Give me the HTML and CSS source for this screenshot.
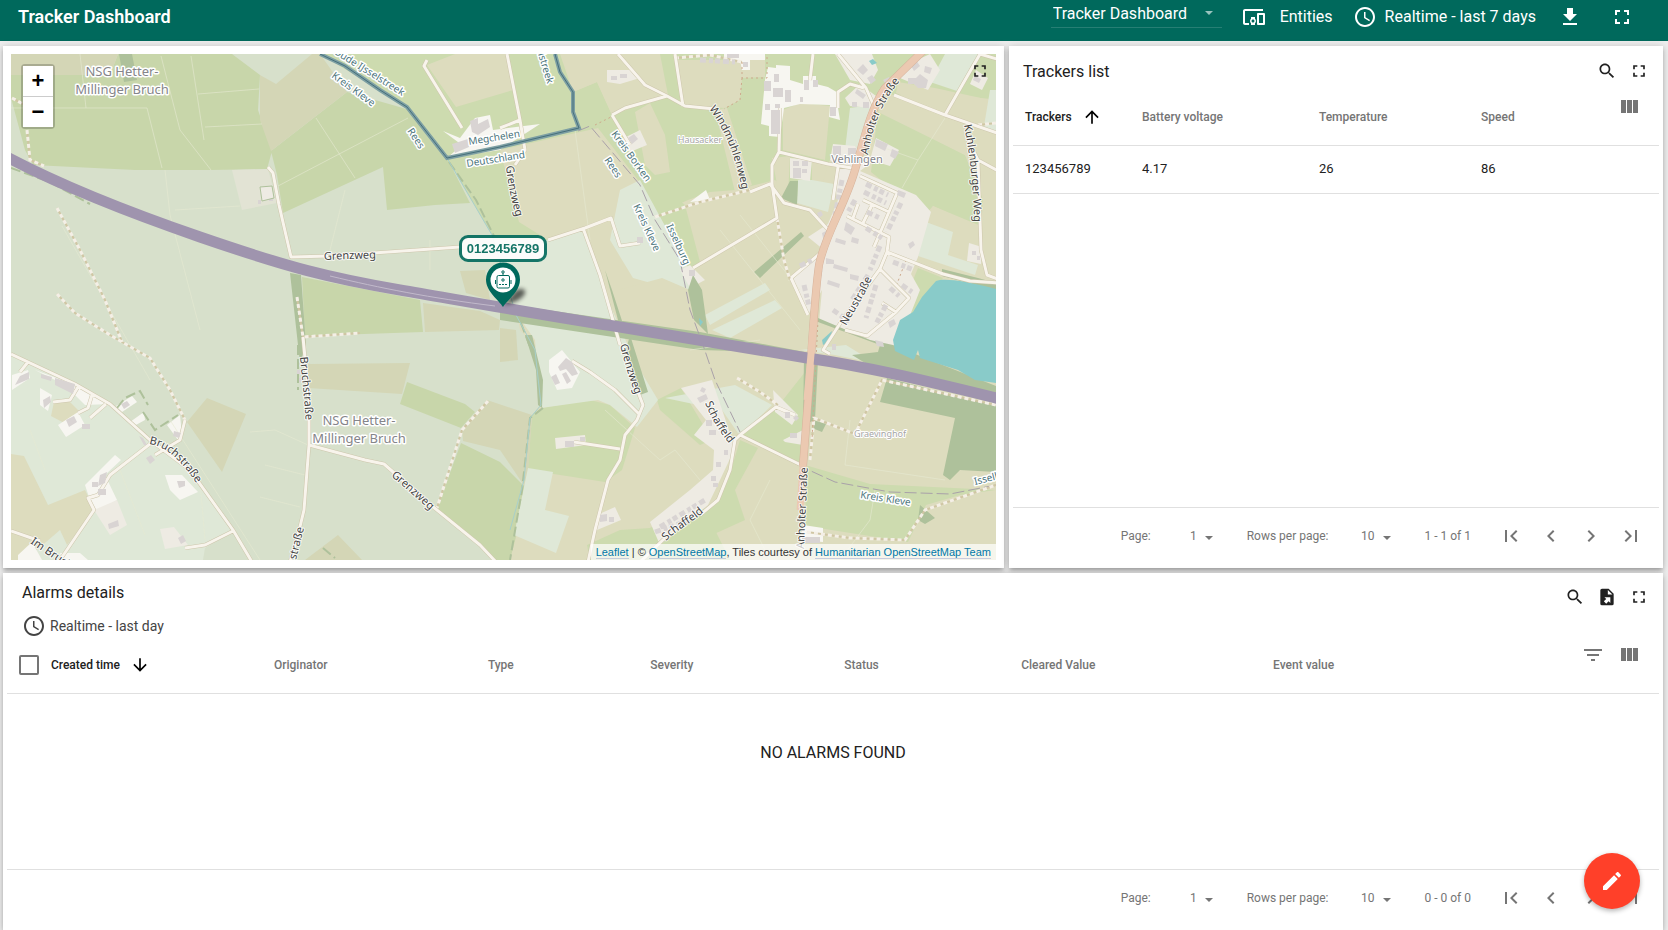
FILE: index.html
```html
<!DOCTYPE html>
<html lang="en">
<head>
<meta charset="utf-8">
<meta name="viewport" content="width=device-width, initial-scale=1">
<title>Tracker Dashboard</title>
<link rel="stylesheet" href="styles.css">
</head>
<body>
<svg class="sprite" aria-hidden="true">
  <symbol id="i-full" viewBox="0 0 24 24"><path d="M7 14H5v5h5v-2H7v-3zm-2-4h2V7h3V5H5v5zm12 7h-3v2h5v-5h-2v3zM14 5v2h3v3h2V5h-5z"/></symbol>
  <symbol id="i-search" viewBox="0 0 24 24"><path d="M15.5 14h-.79l-.28-.27C15.41 12.59 16 11.11 16 9.5 16 5.91 13.09 3 9.5 3S3 5.91 3 9.5 5.91 16 9.5 16c1.61 0 3.09-.59 4.23-1.57l.27.28v.79l5 4.99L20.49 19l-4.99-5zm-6 0C7.01 14 5 11.99 5 9.5S7.01 5 9.5 5 14 7.01 14 9.5 11.99 14 9.5 14z"/></symbol>
  <symbol id="i-cols" viewBox="0 0 24 24"><path d="M10 18h5V5h-5v13zm-6 0h5V5H4v13zM16 5v13h5V5h-5z"/></symbol>
  <symbol id="i-filter" viewBox="0 0 24 24"><path d="M10 18h4v-2h-4v2zM3 6v2h18V6H3zm3 7h12v-2H6v2z"/></symbol>
  <symbol id="i-clock" viewBox="0 0 24 24"><path d="M11.99 2C6.47 2 2 6.48 2 12s4.47 10 9.99 10C17.52 22 22 17.52 22 12S17.52 2 11.99 2zM12 20c-4.42 0-8-3.58-8-8s3.58-8 8-8 8 3.58 8 8-3.58 8-8 8zm.5-13H11v6l5.25 3.15.75-1.23-4.5-2.67z"/></symbol>
  <symbol id="i-download" viewBox="0 0 24 24"><path d="M19 9h-4V3H9v6H5l7 7 7-7zM5 18v2h14v-2H5z"/></symbol>
  <symbol id="i-devices" viewBox="0 0 24 24"><path d="M3 6h18V4H3c-1.1 0-2 .9-2 2v12c0 1.1.9 2 2 2h4v-2H3V6zm10 6H9v1.78c-.61.55-1 1.33-1 2.22s.39 1.67 1 2.22V20h4v-1.78c.61-.55 1-1.34 1-2.22s-.39-1.67-1-2.22V12zm-2 5.5c-.83 0-1.5-.67-1.5-1.5s.67-1.5 1.5-1.5 1.5.67 1.5 1.5-.67 1.5-1.5 1.5zM22 8h-6c-.5 0-1 .5-1 1v10c0 .5.5 1 1 1h6c.5 0 1-.5 1-1V9c0-.5-.5-1-1-1zm-1 10h-4v-8h4v8z"/></symbol>
  <symbol id="i-first" viewBox="0 0 24 24"><path d="M18.41 16.59L13.82 12l4.59-4.59L17 6l-6 6 6 6zM6 6h2v12H6z"/></symbol>
  <symbol id="i-prev" viewBox="0 0 24 24"><path d="M15.41 7.41L14 6l-6 6 6 6 1.41-1.41L10.83 12z"/></symbol>
  <symbol id="i-next" viewBox="0 0 24 24"><path d="M10 6L8.59 7.41 13.17 12l-4.58 4.59L10 18l6-6z"/></symbol>
  <symbol id="i-last" viewBox="0 0 24 24"><path d="M5.59 7.41L10.18 12l-4.59 4.59L7 18l6-6-6-6zM16 6h2v12h-2z"/></symbol>
  <symbol id="i-up" viewBox="0 0 24 24"><path d="M4 12l1.41 1.41L11 7.83V20h2V7.83l5.58 5.59L20 12l-8-8-8 8z"/></symbol>
  <symbol id="i-down" viewBox="0 0 24 24"><path d="M20 12l-1.41-1.41L13 16.17V4h-2v12.17l-5.58-5.59L4 12l8 8 8-8z"/></symbol>
  <symbol id="i-edit" viewBox="0 0 24 24"><path d="M3 17.25V21h3.75L17.81 9.94l-3.75-3.75L3 17.25zM20.71 7.04c.39-.39.39-1.02 0-1.41l-2.34-2.34c-.39-.39-1.02-.39-1.41 0l-1.83 1.83 3.75 3.75 1.83-1.83z"/></symbol>
  <symbol id="i-export" viewBox="0 0 24 24"><path fill-rule="evenodd" d="M6 2C4.89 2 4 2.9 4 4V20A2 2 0 0 0 6 22H18A2 2 0 0 0 20 20V8L14 2H6M13 3.5L18.5 9H13V3.5M8.93 12.22H16V19.29L13.88 17.17L11.05 20L8.22 17.17L11.05 14.35L8.93 12.22"/></symbol>
  <symbol id="i-caret" viewBox="0 0 8 4"><path d="M0 0h8L4 4z"/></symbol>
</svg>

<header class="topbar">
  <h1 class="topbar-title">Tracker Dashboard</h1>
  <div class="state-select">
    <select aria-label="Dashboard"><option>Tracker Dashboard</option></select>
    <svg class="caret"><use href="#i-caret"/></svg>
  </div>
  <button class="bar-btn entities"><svg class="icon"><use href="#i-devices"/></svg>Entities</button>
  <button class="bar-btn timewindow"><svg class="icon"><use href="#i-clock"/></svg>Realtime - last 7 days</button>
  <button class="bar-btn" aria-label="Export"><svg class="icon"><use href="#i-download"/></svg></button>
  <button class="bar-btn full" aria-label="Fullscreen"><svg class="icon"><use href="#i-full"/></svg></button>
</header>

<main class="grid">
  <section class="card map-card" aria-label="Map">
    <div class="map">
      <svg class="map-svg" viewBox="11 54 985 506" preserveAspectRatio="xMidYMid slice">
        <defs>
          <path id="p-anh" d="M868 155C872 130 880 105 899 82"/>
          <path id="p-anh2" d="M804 549L808 460"/>
          <path id="p-wind" d="M709 109C722 125 734 150 742 190"/>
          <path id="p-kuhl" d="M964 125C969 150 974 185 974 230"/>
          <path id="p-neu" d="M846 326C855 310 865 295 874 274"/>
          <path id="p-gr1" d="M506 166C508 185 512 205 519 226"/>
          <path id="p-gr2" d="M620 345C624 362 630 380 638 402"/>
          <path id="p-gr3" d="M391 476C403 486 418 499 432 512"/>
          <path id="p-br1" d="M300 357C302 380 305 400 306 430"/>
          <path id="p-br2" d="M149 444C168 447 182 462 197 484"/>
          <path id="p-sch1" d="M705 403C712 420 720 433 733 448"/>
          <path id="p-sch2" d="M666 541C676 530 688 526 705 511"/>
          <path id="tracks" d="M57 208L80 250 105 300 122 342M57 294L75 313 110 335 122 342 150 358 170 390 185 420M297 297L303 337 360 333M488 401L462 430 437 508M655 217L700 202 750 190M777 218L784 260 790 280M807 532L850 538 905 540 925 510 996 485M810 460L814 418 855 434 882 380 996 405M737 378L760 392 778 405M27 130L30 160 44 166M12 98L25 105M675 58L710 55 742 62M996 123L970 126"/>
          <path id="roads" d="M268 167L273 173 279 205 291 257 330 256 460 247M303 337L309 400 309 445 304 510 298 535 290 562M309 445L365 460 384 464 432 506 480 545 496 562M11 354L75 384 110 404 150 440 190 470 233 530 252 562M150 444L110 475 98 495 88 498 94 510 60 560M185 420L180 440 155 455M11 531L40 541M185 548L205 545 233 531M28 362L20 372M78 387L70 400 53 402M92 395L88 408 78 413M106 404L90 418M427 60L424 66 462 128M507 54L520 120 525 150 515 165M500 128L520 120M548 240L585 228 611 218 620 246 640 243M583 228L600 275 620 345M638 392L643 405 637 420 625 435 620 460 608 480 595 530 588 562M572 361L590 372 615 390 640 415M574 442L620 449M612 115L625 108 667 96 685 106 715 109M618 54L645 85 667 96M675 54L683 106M612 115L630 145M750 192L770 184 784 203 810 210 831 233M779 152L828 164 858 169M780 108L779 152 772 165 772 184 777 218 693 268M813 54L810 80M838 54L866 88 874 106M894 95L945 115 1000 134M945 115L980 54 1000 60M838 108L838 92 850 84 864 88M968 140L978 160 981 250 987 275 1000 280M978 160L1000 172M860 176L897 193 874 247M847 216L889 237 887 252 943 274 970 281 1000 283M838 167L833 200M887 252L880 269 841 322 823 350 830 354M880 269L909 298 896 312 867 336 845 330M791 278L824 250M791 278L808 315M863 200L889 212M872 205L863 223M858 204L853 218M896 312L882 303M803 466L740 435 735 440 730 470 718 500 700 515M740 435L776 407 795 415M665 538L640 562"/>
        </defs>

        <rect x="11" y="54" width="985" height="506" fill="#dddcbe"/>

        <!-- meadows -->
        <g fill="#cddbaf">
          <path d="M320 54H560L573 92 597 82 612 115 640 110 665 172 650 175 685 205 700 262 690 270 655 218 638 180 598 128 580 132 500 150 519 222 548 240H493L447 158 407 107Z"/>
          <path d="M612 54H1000V100L960 96 893 95 885 90 860 105 860 150 850 170 830 160 818 185 797 196 775 180 735 190 710 192 688 200 655 215 640 180 612 115Z"/>
          <path d="M541 408L590 400 610 405 635 428 622 470 605 482 528 470 532 415Z"/>
          <path d="M657 400L681 388 693 408 712 440 700 445 660 410Z"/>
          <path d="M740 436L775 410 805 372 803 465 785 458Z"/>
          <path d="M805 465L870 484 996 490 960 495 926 505 908 542 806 526Z"/>
          <path d="M740 440L758 448 735 490 745 520 690 545 680 530 715 505 728 480Z"/>
          <path d="M587 545L620 530 650 528 700 500 730 560H590Z"/>
          <path d="M203 560L207 546 233 533 247 560Z"/>
          <path d="M878 110L965 155 983 200 981 228 933 206 925 215 871 172Z"/>
          <path d="M918 268L943 278 912 315 905 300Z"/>
        </g>
        <path fill="#dddcbe" d="M562 54H660L668 95 612 115 597 82 573 92ZM675 60L765 60V77L742 78 740 100 725 108 683 106ZM635 112L650 103 665 135 670 172 655 175 645 165ZM715 110L727 108 752 185 735 192ZM783 110L800 103 830 106 825 160 783 150ZM896 96L970 130 1000 135V283L985 280 983 165 965 155 878 112ZM933 206L981 226 980 262 948 255 953 232 926 222ZM772 158L790 156 788 196 780 200ZM812 160L828 164 822 186 812 180ZM898 82L935 88 990 100 984 124 945 113 896 93ZM455 54H507L513 90 456 107 427 65Z"/>

        <!-- nature reserve -->
        <path fill="#d7e0cb" d="M11 54H320L407 107 447 158 495 240 515 305 520 330 538 350 541 405 532 415 525 490 510 560H11Z"/>
        <path fill="#c8d6aa" d="M11 75L110 75 118 54H232L260 75 258 110 272 151 267 169 210 170 135 170 33 165 25 150 11 98ZM347 92L410 110 447 158 470 203 435 205 387 210 383 167 283 213 277 175 271 151ZM302 277L420 300 423 332 305 336ZM407 382L465 404 475 412 461 428 400 404ZM461 443L500 462 528 490 510 560H494L437 508Z"/>
        <path fill="#d4d6b6" d="M11 54H118L110 75H11ZM312 54H320L347 92 271 151 260 120V75L276 84ZM423 303L480 311 500 320 499 330 425 332ZM460 271L485 270 490 300 466 293ZM308 364L410 363 402 394 308 388ZM207 398L246 414 222 472 187 422ZM487 400L532 415 527 490 500 450 463 441 462 428ZM305 560L338 535 362 560ZM500 328L516 330 518 360 500 362Z"/>
        <path fill="#e2e3d4" d="M232 170L268 169 277 203 242 210Z"/>
        <path fill="#dfe8d7" d="M11 354L75 384 110 404 150 440 190 470 233 530 205 548 203 560H11ZM493 240H548L583 228 600 272 608 300 640 370 658 400 637 427 610 405 598 400 541 408 535 340 516 313ZM620 190L640 180 700 290 676 290 633 278 610 240ZM665 398L735 385 772 405 740 436 722 410ZM705 315L765 283 770 290 710 325ZM712 330L775 300 782 308 730 338ZM528 468L553 472 545 510 569 516 556 553 514 535ZM798 180L812 180 834 184 828 212 797 203ZM850 108L872 105 866 155 845 150ZM800 350L846 345 875 363 835 355ZM926 222L953 232 948 255 978 265 975 275 918 256ZM945 54H978L957 91 930 82ZM990 90H1000V135L984 126Z"/>
        <path fill="#dddcbe" d="M11 454L24 456 48 505 85 490 95 510 67 545 60 530 25 560H11ZM54 402L68 400 80 412 66 424 51 416Z"/>
        <path fill="#dddcbe" d="M608 300L618 290 662 278 690 290 695 330 640 325 630 350Z"/>

        <!-- built-up land -->
        <path fill="#eeebe3" d="M860 171L916 195 931 212 918 257 911 274 920 290 896 351 865 338 841 328 819 322 822 290 808 315 791 281 824 250 808 237 828 224 838 200 834 184 838 166 830 160 833 144 855 146 860 155 872 162ZM870 160L876 138 899 150 890 166ZM835 54H872L878 70 870 84 850 80ZM906 65L930 54 940 70 928 90 900 78ZM860 84L876 96 872 108 850 106 845 98ZM681 388L712 380 735 448 720 480 708 505 660 545 650 522 690 490 713 470 714 450 694 435 706 420ZM607 70L630 70 640 78 620 84 607 82ZM773 390L798 415 792 425 775 412ZM783 440L803 430V445L785 442ZM790 158L812 160 810 181 790 178ZM620 140L640 130 647 145 630 152ZM690 265L705 280 690 288 680 270ZM969 243L982 247 981 264 967 261ZM976 70L988 78 982 90 970 84ZM597 515L615 507 621 520 597 530Z"/>
        <path fill="#f7f6f1" d="M768 67L776 68V65L790 66V80L803 84V76L816 76V84L828 87 840 94 838 108 840 120 829 117 830 105 800 104 784 108 780 137 769 136V126L761 124 765 80ZM443 131L460 138 475 118 490 115 493 130 540 124 500 150 447 158 462 145ZM549 360L562 350 580 372 572 388 557 390 549 372ZM35 370L62 380 80 386 110 404 85 405 65 385ZM12 375L28 370 30 378 12 390ZM85 485L115 455 121 460 105 475 117 500 97 512 90 500ZM165 475L182 475 198 492 180 500 170 490ZM724 54H765V60H750V70H742L740 60H724ZM40 388L52 395 48 411 40 405ZM58 425L78 412 85 425 66 437ZM116 406L132 396 137 402 122 412ZM130 422L144 412 145 420 134 426ZM167 425L180 415 182 435 178 440ZM18 555L32 542 42 560H18ZM803 525L823 528V542L800 540ZM690 202L706 190 710 200ZM60 553L80 553 88 560H62Z"/>
        <path fill="#eeebe3" d="M94 510L117 500 127 525 110 535ZM160 529L174 527 188 545 165 549ZM555 438L585 435 586 445 556 449Z"/>

        <!-- woods -->
        <path fill="#aec19b" d="M887 378L996 406V472L960 470 950 480 943 475 955 418 880 402ZM818 318L870 340 893 345 935 362 996 386 996 395 880 372 852 355 878 352 880 345 818 322ZM688 290L694 320 708 334 702 290 693 275ZM804 358L818 360 815 420 803 425ZM290 273L301 275 306 345 300 363ZM605 270L612 290 625 330 618 320ZM630 335L648 392 640 395 626 350ZM500 303L561 312 700 332 810 353 700 350 500 320ZM754 272L801 232 804 236 760 278ZM942 269L978 278 996 283V290L942 276ZM119 54L132 54 137 80 124 82ZM790 181L798 181 797 205 781 198ZM525 335L532 335 543 380 542 408 538 405 536 370ZM813 420L826 424 822 432 812 428ZM920 505L935 518 925 524 918 520Z"/>
        <path fill="#89cbc9" d="M936 281C945 278 965 281 996 289V383L975 380 958 370 920 358 918 350 914 360 895 351 893 340 900 320 913 312 922 297ZM822 340L832 331 830 341 823 345ZM869 61L873 59 877 63 872 65ZM699 318L703 322 700 326Z"/>

        <!-- field boundaries -->
        <path class="field" d="M161 56L180 130 211 170M191 56L204 140M80 54L86 108M11 108H147L162 168M198 94L259 89M205 127L262 124M316 118L355 178M278 186L408 118M165 170L170 215 200 330M62 226L150 380M170 420L260 560M175 210L240 206M345 190L330 250M430 240V270M575 130L590 240M605 410L660 460 675 450 700 480M770 480L750 520 770 560M845 465L945 480M850 420L845 465M875 490L870 520 840 560M720 230L800 330M740 215L800 290M250 432L275 430 308 445M265 465L305 475M260 497L300 507M30 430L45 470M120 470L145 535M200 480L205 540M876 145L918 160 945 118M918 160L902 188M690 350L760 340"/>

        <!-- hedges and administrative borders -->
        <path class="hedge" d="M117 408L125 398 140 391 148 405M143 412L155 430 178 415M11 168L50 182 90 204M449 162L476 200 494 236M516 310L535 360M543 408L530 418 522 490 510 560M323 548L335 558M298 345V390"/>
        <path fill="none" stroke="#a7cfca" stroke-width="1" d="M447 158L492 235 506 280 516 315 535 350 541 405 530 418 524 480 510 530"/>
        <path class="border" d="M578 131L590 126 640 185 655 220 680 260 690 310 703 345 715 380 740 432M755 442L800 466 835 482 890 492 950 494 996 485"/>

        <use href="#tracks" class="track-case"/>
        <use href="#tracks" class="track"/>
        <path class="foot" d="M742 62V78H767V56M742 78L740 100 724 109M595 125L611 117M906 260L897 284M818 320L812 440"/>
        <use href="#roads" class="road-case"/>
        <use href="#roads" class="road"/>

        <!-- buildings -->
        <path fill="#d9d4d3" d="M774 74h5v8h-5zM764 81h7v10h-7zM773 88h10v9h-10zM785 90h6v12h-6zM771 110h9v24h-9zM804 80h5v10h-5zM813 80h5v7h-5zM800 97h3v5h-3zM765 104h5v6h-5zM775 104h5v4h-5zM830 107h6v9h-6zM470 121l8-3v6l10-5 2 8-12 8-6-3zM452 144l16-5 1 8-14 6zM55 378l20 6-2 10-18-9zM41 374l11 3-1 4-10-3zM20 376l9-4v7l-14 6zM43 400l7-4 1 6-7 6zM66 420l8-4 3 6-8 5zM82 424h8v5h-8zM100 475l7-3-2 11-7 3zM92 482h6v5h-6zM98 489h8v6h-8zM108 524l10-4 1 6-10 3zM177 481h8v5l-6 2zM146 458l5-3 4 5-5 4zM174 431l7 2-2 5-6-2zM178 538l5-3 3 6-5 3zM139 436l4 2 4 7-3 0zM121 404l6-3 3 4-6 4zM558 367l8-9 6 4 6 12-6 2-6-7-6 2zM551 377l5-3 4 9-5 2zM562 374l4-2 5 9-4 3zM565 441h9v6h-9zM580 437h5v4h-5zM611 76h6v4h-6zM620 74h7v4h-7zM628 138l6-4 4 5-6 5zM637 237h6v6h-6zM689 270h6v6h-6zM793 161h6v5h-6zM802 161h6v5h-6zM793 168h8v10h-8zM802 169h5v4h-5zM876 139l12 5-3 7-10-5zM892 149l7 3-4 7-5-3zM833 146h8v9h-8zM848 148h8v7h-8zM857 70l6-6 5 6-5 5zM867 78l5-3 4 5-5 4zM883 80l6-3 3 5-5 4zM857 89l9 6-3 4-8-6zM852 102h5v5h-5zM863 102h6v6h-6zM910 64l6-4 4 6-6 5zM908 78h8l4-4 8 6-2 8h-8l-4-4h-6zM925 66l7 2-2 6-6-2zM972 251h4v4h-4zM977 256h3v4h-3zM975 76l6 3-2 4-6-3zM846 222l9 6-4 7-7-5zM836 238l10 3-1 4-10-3zM852 237l7 2-1 5-7-2zM826 258l8 2v4h-8zM834 264l14 4-1 4-14-4zM850 274l9 2-1 5-8-2zM828 280l12 4-1 4-12-4zM888 322l6-3 2 5-6 4zM875 340l8 2 1 5-7-1zM832 344h4v6h-4zM898 190l8 3-2 5-7-3zM908 244l5-3 2 4-5 4zM817 213l4-2 2 4-4 3zM822 233l4-2 1 5-4 2zM790 433h7v5h-7zM785 412h5v6h-5zM793 418l3-3 3 3-3 3zM702 387l4 2-2 4-4-2zM706 420h6v6h-6zM713 417h4v6h-4zM709 430h7v5h-7zM724 450h4v5h-4zM716 462h5v5h-5zM711 476h5v5h-5zM713 483h5v4h-5zM600 515l7-1v7l-7 1zM609 517h5v5h-5zM697 398l9-4 2 5-8 4zM258 200h3v4h-3zM269 196h4v5h-4zM297 370h4v4h-4zM299 378h4v4h-4zM802 537h18v6h-18zM743 62h5v5h-5zM727 54h12v4h-12z"/>
        <path class="houses" d="M842 180L835 215M866 184L888 195M901 203L887 232M867 212L880 218M864 192L886 203M855 200L848 212M866 228L882 238M880 246L870 270M893 262L914 270M868 275L852 300M876 285L866 318M890 288L899 296M886 305L876 324M833 310L850 322M800 266L812 260M804 285L809 306M820 270L815 300M902 285L912 292M660 527L705 500M655 532L690 520M700 60L735 62"/>
        <path class="yard" d="M260 187l12-1 2 12-12 3z"/>

        <!-- main road and motorway -->
        <path d="M924 50L885 88C870 110 864 140 855 170C845 205 825 235 819 265C814 300 812 350 808 400L803 466" fill="none" stroke="#d6b39c" stroke-width="8"/>
        <path d="M924 50L885 88C870 110 864 140 855 170C845 205 825 235 819 265C814 300 812 350 808 400L803 466 800 510" fill="none" stroke="#ebc9b1" stroke-width="7"/>
        <path d="M5 156C50 180 110 206 200 237S330 278 400 290 560 318 620 327L807 358C870 367 930 382 1000 399" fill="none" stroke="#9f94ae" stroke-width="11"/>
        <path d="M330 276C380 288 430 298 495 306" fill="none" stroke="#c2bacb" stroke-width="1"/>
        <path d="M814 320L807 400" stroke="#ebc9b1" stroke-width="7"/>

        <!-- state border -->
        <path class="state-line" d="M320 54L345 66 380 90 407 107 425 130 447 158 500 147 579 128 573 112V92L560 72 555 54"/>
        <path class="state-core" d="M320 54L345 66 380 90 407 107 425 130 447 158 500 147 579 128 573 112V92L560 72 555 54"/>

        <g class="lbl area"><text x="122" y="76">NSG Hetter-</text><text x="122" y="94">Millinger Bruch</text><text x="359" y="425">NSG Hetter-</text><text x="359" y="443">Millinger Bruch</text></g>
        <g class="lbl place"><text class="village" x="857" y="163">Vehlingen</text><text x="700" y="143">Hausacker</text><text x="880" y="437">Graevinghof</text></g>
        <g class="lbl street">
          <text x="324" y="260" transform="rotate(-2 324 260)">Grenzweg</text>
          <text><textPath href="#p-anh">Anholter Straße</textPath></text>
          <text><textPath href="#p-anh2">Anholter Straße</textPath></text>
          <text><textPath href="#p-wind">Windmühlenweg</textPath></text>
          <text><textPath href="#p-kuhl">Kuhlenburger Weg</textPath></text>
          <text><textPath href="#p-neu">Neustraße</textPath></text>
          <text><textPath href="#p-gr1">Grenzweg</textPath></text>
          <text><textPath href="#p-gr2">Grenzweg</textPath></text>
          <text><textPath href="#p-gr3">Grenzweg</textPath></text>
          <text><textPath href="#p-br1">Bruchstraße</textPath></text>
          <text><textPath href="#p-br2">Bruchstraße</textPath></text>
          <text x="296" y="560" transform="rotate(-76 296 560)">straße</text>
          <text><textPath href="#p-sch1">Schaffeld</textPath></text>
          <text><textPath href="#p-sch2">Schaffeld</textPath></text>
          <text x="30" y="543" transform="rotate(34 30 543)">Im Bruch</text>
        </g>
        <g class="lbl admin">
          <text x="333" y="53" transform="rotate(32 333 53)">Oude IJsselstreek</text>
          <text x="331" y="77" transform="rotate(36 331 77)">Kreis Kleve</text>
          <text x="407" y="131" transform="rotate(56 407 131)">Rees</text>
          <text x="469" y="145" transform="rotate(-9 469 145)">Megchelen</text>
          <text x="467" y="167" transform="rotate(-9 467 167)">Deutschland</text>
          <text x="538" y="54" transform="rotate(73 538 54)">lstreek</text>
          <text x="611" y="134" transform="rotate(54 611 134)">Kreis Borken</text>
          <text x="604" y="160" transform="rotate(56 604 160)">Rees</text>
          <text x="633" y="206" transform="rotate(65 633 206)">Kreis Kleve</text>
          <text x="666" y="226" transform="rotate(65 666 226)">Isselburg</text>
          <text x="860" y="498" transform="rotate(9 860 498)">Kreis Kleve</text>
          <text x="975" y="485" transform="rotate(-14 975 485)">Isselburg</text>
        </g>

        <!-- tracker marker -->
        <filter id="soft" x="-50%" y="-50%" width="200%" height="200%"><feGaussianBlur stdDeviation="2"/></filter>
        <path d="M504 305L514 292C519 287 526 288 525 293S514 303 504 305Z" opacity=".6" filter="url(#soft)"/>
        <path fill="#00695c" d="M503 307C499 300 486 292 486 279.500A17 17 0 0 1 520 279.500C520 292 507 300 503 307Z"/>
        <circle cx="503" cy="280" r="12.500" fill="#fff"/>
        <g fill="none" stroke="#00695c"><rect x="497" y="275.500" width="12.500" height="12.500" rx="1.500"/><path d="M503 275v-2M495.500 280v4M511 280v4"/><circle cx="503" cy="272" r="1.200"/><circle cx="503" cy="280" r="1.200"/><path d="M499 284.500h2m1 0h2m1 0h2"/></g>
        <g opacity=".9"><rect x="460.500" y="236.500" width="85" height="24" rx="7.500" fill="#fff" stroke="#00695c" stroke-width="3"/><text class="marker-text" x="503" y="253">0123456789</text></g>
      </svg>
      <div class="zoom"><button aria-label="Zoom in">+</button><button aria-label="Zoom out">−</button></div>
      <button class="map-full" aria-label="Fullscreen"><svg class="icon small"><use href="#i-full"/></svg></button>
      <div class="attribution"><a href="#">Leaflet</a> | © <a href="#">OpenStreetMap</a>, Tiles courtesy of <a href="#">Humanitarian OpenStreetMap Team</a></div>
    </div>
  </section>

  <section class="card list-card">
    <div class="card-head">
      <h2>Trackers list</h2>
      <div class="tools">
        <button aria-label="Search"><svg class="icon small"><use href="#i-search"/></svg></button>
        <button aria-label="Fullscreen"><svg class="icon small"><use href="#i-full"/></svg></button>
      </div>
    </div>
    <div class="table-area">
      <table class="trackers">
        <colgroup><col class="t1"><col class="t2"><col class="t3"><col class="t4"><col></colgroup>
        <thead><tr><th class="sorted"><span class="sort-head">Trackers<svg class="sort"><use href="#i-up"/></svg></span></th><th>Battery voltage</th><th>Temperature</th><th>Speed</th><th class="actions"><button aria-label="Columns"><svg class="icon"><use href="#i-cols"/></svg></button></th></tr></thead>
        <tbody><tr><td>123456789</td><td>4.17</td><td>26</td><td>86</td><td></td></tr></tbody>
      </table>
    </div>
    <nav class="pager" aria-label="Trackers pages">
      <label for="tp">Page:</label><span class="pick"><select id="tp"><option>1</option></select><svg class="caret"><use href="#i-caret"/></svg></span>
      <label for="tr">Rows per page:</label><span class="pick"><select id="tr"><option>10</option></select><svg class="caret"><use href="#i-caret"/></svg></span>
      <span class="range">1 - 1 of 1</span>
      <button aria-label="First page"><svg class="icon"><use href="#i-first"/></svg></button><button aria-label="Previous page"><svg class="icon"><use href="#i-prev"/></svg></button><button aria-label="Next page"><svg class="icon"><use href="#i-next"/></svg></button><button aria-label="Last page"><svg class="icon"><use href="#i-last"/></svg></button>
    </nav>
  </section>

  <section class="card alarms-card">
    <div class="card-head">
      <div>
        <h2>Alarms details</h2>
        <button class="card-time"><svg class="icon"><use href="#i-clock"/></svg>Realtime - last day</button>
      </div>
      <div class="tools">
        <button aria-label="Search"><svg class="icon small"><use href="#i-search"/></svg></button>
        <button aria-label="Export"><svg class="icon small"><use href="#i-export"/></svg></button>
        <button aria-label="Fullscreen"><svg class="icon small"><use href="#i-full"/></svg></button>
      </div>
    </div>
    <div class="table-area">
      <table class="alarms">
        <colgroup><col class="a0"><col class="a1"><col class="a2"><col class="a3"><col class="a4"><col class="a5"><col class="a6"><col class="a7"><col></colgroup>
        <thead><tr><th><input type="checkbox" class="check" aria-label="Select all"></th><th class="sorted"><span class="sort-head">Created time<svg class="sort"><use href="#i-down"/></svg></span></th><th>Originator</th><th>Type</th><th>Severity</th><th>Status</th><th>Cleared Value</th><th>Event value</th><th class="actions"><button aria-label="Filter"><svg class="icon"><use href="#i-filter"/></svg></button><button aria-label="Columns"><svg class="icon"><use href="#i-cols"/></svg></button></th></tr></thead>
      </table>
      <p class="empty">NO ALARMS FOUND</p>
    </div>
    <nav class="pager" aria-label="Alarms pages">
      <label for="ap">Page:</label><span class="pick"><select id="ap"><option>1</option></select><svg class="caret"><use href="#i-caret"/></svg></span>
      <label for="ar">Rows per page:</label><span class="pick"><select id="ar"><option>10</option></select><svg class="caret"><use href="#i-caret"/></svg></span>
      <span class="range">0 - 0 of 0</span>
      <button aria-label="First page"><svg class="icon"><use href="#i-first"/></svg></button><button aria-label="Previous page"><svg class="icon"><use href="#i-prev"/></svg></button><button aria-label="Next page"><svg class="icon"><use href="#i-next"/></svg></button><button aria-label="Last page"><svg class="icon"><use href="#i-last"/></svg></button>
    </nav>
  </section>
</main>
<button class="fab" aria-label="Edit"><svg class="icon"><use href="#i-edit"/></svg></button>
</body>
</html>
```
FILE: styles.css
```css
* { box-sizing: border-box; }
body {
  margin: 0;
  height: 100vh;
  display: flex;
  flex-direction: column;
  background: #eee;
  color: #212121;
  font-family: Roboto, "Liberation Sans", sans-serif;
  overflow: hidden;
}
button, select {
  font: inherit;
  color: inherit;
  background: none;
  border: 0;
  margin: 0;
  padding: 0;
}
button { cursor: pointer; display: inline-flex; align-items: center; justify-content: center; }
select { appearance: none; }
h1, h2, p { margin: 0; }
.sprite { position: absolute; width: 0; height: 0; }
.icon { width: 24px; height: 24px; fill: currentColor; flex: none; display: block; }
.icon.small { width: 20px; height: 20px; }
.caret { width: 8px; height: 4px; fill: currentColor; position: absolute; right: 0; top: 50%; pointer-events: none; }

/* top bar */
.topbar {
  flex: none;
  height: 41px;
  padding: 0 34px 8px 18px;
  display: flex;
  align-items: center;
  background: #00695c;
  color: #fff;
  font-size: 16px;
}
.topbar-title { font-size: 18px; font-weight: 600; margin-right: auto; }
.state-select {
  position: relative;
  align-self: flex-start;
  width: 171px;
  height: 28px;
  margin-right: 20px;
  border-bottom: 1px solid rgba(255, 255, 255, .15);
}
.state-select select { display: block; width: 100%; height: 26px; padding-left: 2px; }
.state-select .caret { right: 9px; top: 11px; opacity: .6; }
.state-select option { color: #212121; }
.entities { gap: 14px; margin-right: 20px; }
.timewindow { gap: 8px; margin-right: 22px; }
.full { margin-left: 28px; }

/* dashboard grid */
.grid {
  flex: 1;
  min-height: 0;
  padding: 5px 5px 0 3px;
  display: grid;
  gap: 5px;
  grid-template-columns: minmax(0, 1001fr) minmax(0, 654fr);
  grid-template-rows: minmax(0, 522fr) minmax(0, 357fr);
}
.card {
  display: flex;
  flex-direction: column;
  min-height: 0;
  background: #fff;
  box-shadow: 0 1px 8px rgba(0, 0, 0, .2), 0 3px 4px rgba(0, 0, 0, .14), 0 3px 3px -2px rgba(0, 0, 0, .12);
}
.map-card { padding: 8px; }
.list-card, .alarms-card { padding: 0 4px 4px; }
.alarms-card { grid-column: 1 / -1; }
.card-head { flex: none; display: flex; justify-content: space-between; }
.card-head h2 { font-size: 16px; font-weight: 400; line-height: 24px; }
.list-card .card-head { padding: 14px 4px 0 10px; height: 43px; }
.alarms-card .card-head { padding: 8px 4px 0 15px; height: 64px; }
.tools { display: flex; align-items: flex-start; }
.list-card .tools { padding-top: 1px; }
.alarms-card .tools { padding-top: 6px; }
.tools button { width: 32px; height: 20px; }
.card-time { display: flex; gap: 4px; margin-top: 9px; font-size: 14px; color: #444; }

/* tables */
.table-area { flex: 1; min-height: 0; overflow: hidden; }
table { width: 100%; table-layout: fixed; border-collapse: collapse; }
th, td { padding: 0; text-align: left; border-bottom: 1px solid #e0e0e0; white-space: nowrap; }
th { height: 56px; font-size: 12px; font-weight: 500; color: #757575; }
td { height: 48px; padding-bottom: 2px; font-size: 13px; }
th.sorted { color: #212121; }
.sort-head { display: flex; align-items: center; gap: 10px; }
.sort { width: 20px; height: 20px; }
.trackers th:not(.actions), .trackers td { padding-left: 12px; }
.trackers .t1 { width: 18.1%; }
.trackers .t2 { width: 27.4%; }
.trackers .t3 { width: 25.1%; }
.trackers .t4 { width: 18%; }
.alarms .a0 { width: 2.66%; }
.alarms .a1 { width: 13.5%; }
.alarms .a2 { width: 12.95%; }
.alarms .a3 { width: 9.83%; }
.alarms .a4 { width: 11.74%; }
.alarms .a5 { width: 10.71%; }
.alarms .a6 { width: 15.25%; }
.alarms .a7 { width: 17.4%; }
.actions { vertical-align: top; text-align: right; padding-right: 12px; }
.actions button { width: 36px; height: 36px; }
.check {
  appearance: none;
  display: block;
  width: 20px;
  height: 20px;
  margin: 0 0 0 12px;
  border: 2px solid #757575;
  border-radius: 2px;
}
.empty { padding-top: 47px; text-align: center; font-size: 16px; line-height: 24px; }

/* pagination */
.pager {
  flex: none;
  height: 57px;
  padding-right: 8px;
  display: flex;
  align-items: center;
  justify-content: flex-end;
  border-top: 1px solid #e0e0e0;
  font-size: 12px;
  color: #757575;
}
.pick { position: relative; width: 44px; margin: 0 34px 0 18px; }
.pick select { display: block; width: 100%; padding-right: 16px; text-align: right; text-align-last: right; }
.range { margin-right: 20px; }
.pager button { width: 40px; height: 40px; }

/* map */
.map { position: relative; flex: 1; min-height: 0; overflow: hidden; }
.map-svg { display: block; width: 100%; height: 100%; }
.zoom {
  position: absolute;
  left: 10px;
  top: 10px;
  border: 2px solid rgba(0, 0, 0, .2);
  border-radius: 4px;
}
.zoom button {
  display: flex;
  width: 30px;
  height: 30px;
  background: #fff;
  color: #000;
  font: bold 22px/30px "Liberation Sans", sans-serif;
}
.zoom button + button { border-top: 1px solid #ccc; height: 31px; }
.map-full { position: absolute; right: 6px; top: 7px; }
.attribution {
  position: absolute;
  right: 0;
  bottom: 0;
  padding: 0 5px;
  background: rgba(255, 255, 255, .7);
  font: 11px/16px "Liberation Sans", sans-serif;
  color: #333;
}
.attribution a { color: #0078a8; text-decoration: none; border-bottom: 1px solid rgba(64, 84, 178, .25); }
.field { fill: none; stroke: #e6e9d2; stroke-width: 1; opacity: .6; }
.hedge { fill: none; stroke: #aec19b; stroke-width: 2; stroke-dasharray: 10 4; }
.border { fill: none; stroke: #a9a1a9; stroke-width: 1; stroke-dasharray: 12 4; }
.track-case { fill: none; stroke: #d0c6a4; stroke-width: 2; }
.track { fill: none; stroke: #f4efe6; stroke-width: 3; stroke-dasharray: 4 3; }
.foot { fill: none; stroke: #cda98c; stroke-width: 1; stroke-dasharray: 2 3; }
.road-case { fill: none; stroke: #cdc6ac; stroke-width: 4; stroke-linejoin: round; }
.road { fill: none; stroke: #f8f4ec; stroke-width: 3; stroke-linejoin: round; }
.houses { fill: none; stroke: #d9d4d3; stroke-width: 5; stroke-dasharray: 6 3 4 2 5 3; }
.yard { fill: #eeebe3; stroke: #aec19b; stroke-width: 1; }
.state-line { fill: none; stroke: #7d9fa3; stroke-width: 4; }
.state-core { fill: none; stroke: #456f7b; stroke-width: 1; }
.lbl { font-family: "Noto Sans", sans-serif; paint-order: stroke; stroke: #fff; stroke-width: 3px; stroke-linejoin: round; }
.area { font-size: 13px; fill: #85858a; text-anchor: middle; }
.place { font-size: 9px; fill: #a5a5a5; text-anchor: middle; stroke-width: 2px; }
.village { font-size: 11px; fill: #85858a; }
.street { font-size: 11px; fill: #444; stroke: rgba(255, 255, 255, .8); stroke-width: 2px; }
.admin { font-size: 10px; fill: #4b747b; }
.marker-text { font: bold 13px "Liberation Sans", sans-serif; fill: #00695c; text-anchor: middle; }

.fab {
  position: fixed;
  right: 28px;
  bottom: 21px;
  width: 56px;
  height: 56px;
  border-radius: 50%;
  background: #ff4029;
  color: #fff;
  box-shadow: 0 2px 5px rgba(0, 0, 0, .3);
}
```
